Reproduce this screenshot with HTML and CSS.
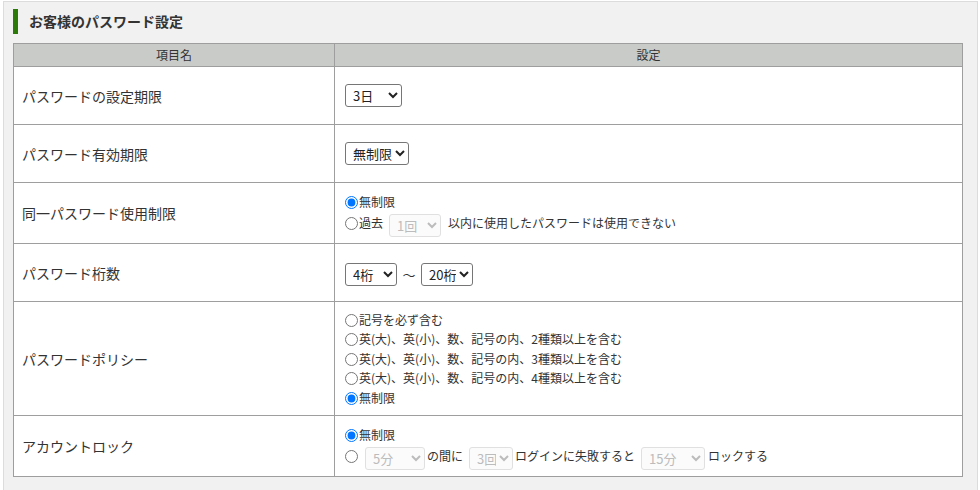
FILE: index.html
```html
<!DOCTYPE html>
<html lang="ja">
<head>
<meta charset="utf-8">
<title>お客様のパスワード設定</title>
<link rel="stylesheet" href="styles.css">
</head>
<body>
<div class="panel">
  <h2 class="title">お客様のパスワード設定</h2>
  <table class="settings">
    <thead>
      <tr><th class="col-name">項目名</th><th>設定</th></tr>
    </thead>
    <tbody>
      <tr class="r58">
        <td class="label">パスワードの設定期限</td>
        <td class="value">
          <select class="sel w57"><option>3日</option><option>7日</option><option>30日</option></select>
        </td>
      </tr>
      <tr class="r58">
        <td class="label">パスワード有効期限</td>
        <td class="value">
          <select class="sel w64"><option>無制限</option><option>30日</option><option>90日</option></select>
        </td>
      </tr>
      <tr class="r61">
        <td class="label">同一パスワード使用制限</td>
        <td class="value">
          <div class="line"><label><input type="radio" name="reuse" checked>無制限</label></div>
          <div class="line sline"><label><input type="radio" name="reuse">過去</label><select class="sel w52 gl gr7" disabled><option>1回</option></select>以内に使用したパスワードは使用できない</div>
        </td>
      </tr>
      <tr class="r58">
        <td class="label">パスワード桁数</td>
        <td class="value">
          <div class="line sline"><select class="sel w52"><option>4桁</option><option>8桁</option></select><span class="tilde">～</span><select class="sel w52"><option>20桁</option><option>32桁</option></select></div>
        </td>
      </tr>
      <tr class="r114">
        <td class="label">パスワードポリシー</td>
        <td class="value">
          <div class="line"><label><input type="radio" name="policy">記号を必ず含む</label></div>
          <div class="line"><label><input type="radio" name="policy">英(大)、英(小)、数、記号の内、2種類以上を含む</label></div>
          <div class="line"><label><input type="radio" name="policy">英(大)、英(小)、数、記号の内、3種類以上を含む</label></div>
          <div class="line"><label><input type="radio" name="policy">英(大)、英(小)、数、記号の内、4種類以上を含む</label></div>
          <div class="line"><label><input type="radio" name="policy" checked>無制限</label></div>
        </td>
      </tr>
      <tr class="r61">
        <td class="label">アカウントロック</td>
        <td class="value">
          <div class="line"><label><input type="radio" name="lock" checked>無制限</label></div>
          <div class="line sline"><input type="radio" name="lock"><select class="sel w60 gl gr2" disabled><option>5分</option></select>の間に<select class="sel w44 gl gr2" disabled><option>3回</option></select>ログインに失敗すると<select class="sel w64 gl gr3" disabled><option>15分</option></select>ロックする</div>
        </td>
      </tr>
    </tbody>
  </table>
</div>
</body>
</html>
```

FILE: styles.css
```css
html, body {
  margin: 0;
  padding: 0;
  background: #ffffff;
}
body {
  padding: 1px 3px;
  font-family: "Noto Sans CJK JP", "Noto Sans", sans-serif;
  color: #333333;
}
.panel {
  width: 954px;
  height: 475px;
  background: #f0f1f0;
  border: 1px solid #dcdcdc;
  padding: 7px 10px 10px 9px;
}
.title {
  margin: 0 0 9px 0;
  height: 25px;
  line-height: 25px;
  border-left: 5px solid #2b7a08;
  padding-left: 11px;
  font-size: 14px;
  font-weight: bold;
  color: #333333;
}
.settings {
  width: 950px;
  border-collapse: collapse;
  background: #ffffff;
  border: 1px solid #9e9e9e;
}
.settings th,
.settings td {
  border: 1px solid #9e9e9e;
}
.settings th {
  background: #c8cbc8;
  font-weight: normal;
  font-size: 12px;
  height: 22px;
  padding: 0;
  line-height: 22px;
  color: #333333;
}
.col-name {
  width: 320px;
}
.label {
  font-size: 14px;
  padding: 0 8px;
  vertical-align: middle;
}
.value {
  font-size: 12px;
  padding: 0 10px;
  vertical-align: middle;
}
.r58 td { height: 57px; }
.r61 td { height: 60px; }
.r114 td { height: 113px; }
.line {
  height: 19.6px;
  line-height: 19.6px;
  white-space: nowrap;
}
.sline {
  height: 23px;
  line-height: 23px;
}
input[type="radio"] {
  width: 13px;
  height: 13px;
  margin: 0 1px 0 0;
  vertical-align: -2px;
}
.sel {
  height: 23px;
  font-family: "Noto Sans CJK JP", "Noto Sans", sans-serif;
  font-size: 13px;
  color: #222222;
  border: 1px solid #767676;
  border-radius: 3px;
  background: #ffffff;
  padding: 0 0 0 3px;
  vertical-align: middle;
  margin: 0;
}
.sel:disabled {
  color: #a0a0a0;
  border-color: #d4d4d4;
  background: #fafafa;
}
.w44 { width: 44px; }
.w52 { width: 52px; }
.w57 { width: 57px; }
.w60 { width: 60px; }
.w64 { width: 64px; }
.gl { margin-left: 6px; }
.gr2 { margin-right: 2px; }
.gr3 { margin-right: 3px; }
.gr7 { margin-right: 7px; }
.tilde {
  display: inline-block;
  width: 24px;
  text-align: center;
  font-size: 13px;
  vertical-align: middle;
}
```
